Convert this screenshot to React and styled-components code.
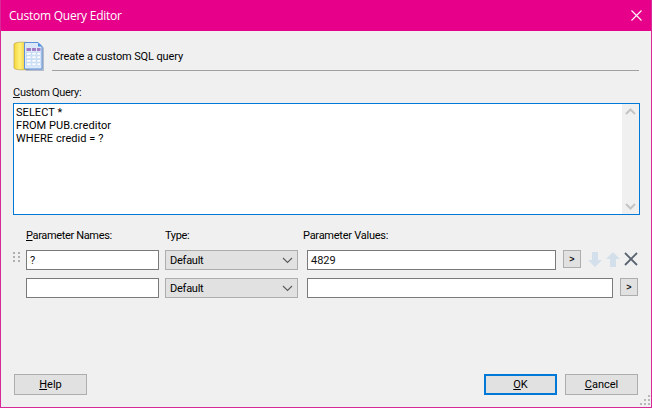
import React from "react";
import styled, { createGlobalStyle } from "styled-components";

const Global = createGlobalStyle`
  html, body { margin: 0; padding: 0; background: #f0f0f0; }
  body { font-family: Roboto, "Liberation Sans", Arial, sans-serif; font-size: 11px; color: #000; }
`;
const Win = styled.div`
  width: 652px; height: 408px; box-sizing: border-box;
  border: 1px solid #d82a96; border-top: 0;
  background: #f0f0f0; display: flex; flex-direction: column; position: relative; overflow: hidden;
`;
const TitleBar = styled.div`
  height: 31px; margin: 0 -1px; background: #e6008a; color: #fff;
  display: flex; align-items: center; justify-content: space-between;
  padding: 0 10px 0 9px; flex: none;
`;
const TitleText = styled.span`font: 12px "Open Sans", "Noto Sans", sans-serif; letter-spacing: -0.02em;`;
const Body = styled.div`
  flex: 1; display: flex; flex-direction: column; padding: 9px 12px 12px 12px; min-height: 0;
`;
const Header = styled.div`display: flex; height: 31px; gap: 8px;`;
const HeaderText = styled.div`
  flex: 1; border-bottom: 1px solid #a0a0a0; height: 31px; box-sizing: border-box;
  padding: 10px 0 0 1px; font-size: 11px; line-height: 14px; letter-spacing: -0.12px;
`;
const FieldLabel = styled.label`display: block; line-height: 13px; margin-top: 15px; margin-bottom: 4px; color: #111; letter-spacing: -0.3px;`;
const U = styled.span`text-decoration: underline;`;
const QueryBox = styled.div`
  height: 112px; box-sizing: border-box; border: 1px solid #0078d7; background: #fff;
  display: flex; margin-right: -1px;
`;
const QueryText = styled.pre`
  flex: 1; margin: 0; padding: 2px 2px; font: 11px/13px Roboto, "Liberation Sans", Arial, sans-serif; letter-spacing: 0.05px;
`;
const ScrollTrack = styled.div`
  width: 17px; background: #f0f0f0; display: flex; flex-direction: column;
  justify-content: space-between; align-items: center; padding: 4px 0; box-sizing: border-box;
`;
const ParamGrid = styled.div`
  display: grid; margin: 14px 0 0 13px;
  grid-template-columns: 133px 133px 331px;
  column-gap: 6px; row-gap: 8px; position: relative;
`;
const ColHead = styled.div`line-height: 13px; height: 13px; white-space: nowrap; letter-spacing: -0.35px;`;
const ValueHead = styled(ColHead)`margin-left: -1px; letter-spacing: -0.25px;`;
const TextField = styled.div`
  height: 20px; box-sizing: border-box; background: #fff; border: 1px solid #7a7a7a;
  padding: 0 3px; line-height: 19px; font-size: 11px; color: #111;
`;
const Combo = styled.div`
  height: 20px; box-sizing: border-box; background: #e1e1e1; border: 1px solid #adadad;
  display: flex; align-items: center; justify-content: space-between; padding: 0 4px 0 4px;
  letter-spacing: -0.25px;
`;
const ValueCell = styled.div`display: flex; gap: 7px; margin-left: 3px; align-items: flex-start;`;
const ValueField = styled(TextField)`width: ${p => p.$w}px; flex: none;`;
const Ellipsis = styled.button`
  width: 18px; height: 18px; padding: 0; flex: none; background: #e1e1e1; border: 1px solid #adadad;
  font: bold 9px "Liberation Sans", sans-serif; color: #111; line-height: 14px;
`;
const Tools = styled.div`display: flex; gap: 2px; margin-left: -1px; align-items: center; height: 18px;`;
const Grip = styled.svg`position: absolute; left: -13px; top: 23px;`;
const Spacer = styled.div`flex: 1;`;
const Footer = styled.div`display: flex; justify-content: space-between; padding: 0 1px 0 1px;`;
const Right = styled.div`display: flex; gap: 8px;`;
const Btn = styled.button`
  width: 73px; height: 21px; padding: 0; box-sizing: border-box; background: #e1e1e1;
  border: ${p => (p.$primary ? "2px solid #0078d7" : "1px solid #adadad")};
  font: 11px Roboto, "Liberation Sans", sans-serif; color: #000;
`;
const ResizeGrip = styled.div`position: absolute; right: 1px; bottom: 2px; line-height: 0;`;

const Chevron = () => (
  <svg width="11" height="7" viewBox="0 0 11 7"><path d="M1 1l4.5 4.5L10 1" fill="none" stroke="#5a5a5a" strokeWidth="1.1" /></svg>
);
const Caret = ({ up }) => (
  <svg width="11" height="7" viewBox="0 0 11 7"><path d={up ? "M1 6l4.5-4.5L10 6" : "M1 1l4.5 4.5L10 1"} fill="none" stroke="#c4c4c4" strokeWidth="2" /></svg>
);
const DbIcon = () => (
  <svg width="31" height="32" viewBox="0 0 31 32" style={{ flex: "none" }}>
    <defs>
      <linearGradient id="y" x1="0" x2="1" y1="0" y2="0">
        <stop offset="0" stopColor="#f4d63c" /><stop offset=".35" stopColor="#fff27a" /><stop offset="1" stopColor="#e0a810" />
      </linearGradient>
    </defs>
    <path d="M1 4c0-2.5 17-2.5 17 0v24c0 2.5-17 2.5-17 0z" fill="url(#y)" stroke="#b59a3a" strokeWidth=".6" />
    <path d="M12 3h14l4 4v23H12z" fill="#6d7fa0" opacity=".45" transform="translate(1 1)" />
    <path d="M11.5 2.5h13.5l4 4v22.5H11.5z" fill="#dbe8fa" stroke="#5d92d8" />
    <path d="M25 2.5v4h4z" fill="#4a90e0" />
    <rect x="13.5" y="8" width="4.5" height="3" fill="#a27cc4" /><rect x="19" y="8" width="4" height="3" fill="#a27cc4" /><rect x="24" y="8" width="3.5" height="3" fill="#a27cc4" />
    {[12.5, 16, 19.5, 23].map(y => [13.5, 19, 24].map(x => (
      <rect key={`${x}-${y}`} x={x} y={y} width={x === 13.5 ? 4.5 : x === 19 ? 4 : 3.5} height="2.5" fill="#fff" stroke="#a8c8ec" strokeWidth=".4" />
    )))}
  </svg>
);
const Arrow = ({ up }) => (
  <svg width="16" height="17" viewBox="0 0 16 17">
    <path d={up ? "M8 1L1 8h4v8h6V8h4z" : "M8 16L1 9h4V1h6v8h4z"} fill="#d3dfea" />
  </svg>
);
const Dots = ({ id, w, h, pts, fill }) => (
  <svg width={w} height={h} viewBox={`0 0 ${w} ${h}`}>
    {pts.map(([x, y]) => <rect key={`${id}${x}${y}`} x={x} y={y} width="2" height="2" fill={fill} />)}
  </svg>
);

function Row({ name, value, w, tools }) {
  return (
    <>
      <TextField>{name}</TextField>
      <Combo>Default<Chevron /></Combo>
      <ValueCell>
        <ValueField $w={w}>{value}</ValueField>
        <Ellipsis>&gt;</Ellipsis>
        {tools && (
          <Tools>
            <Arrow /><Arrow up />
            <svg width="16" height="16" viewBox="0 0 16 16"><path d="M2 2l12 12M14 2L2 14" stroke="#5a6470" strokeWidth="1.8" /></svg>
          </Tools>
        )}
      </ValueCell>
    </>
  );
}

export default function App() {
  return (
    <>
      <Global />
      <Win>
        <TitleBar>
          <TitleText>Custom Query Editor</TitleText>
          <svg width="11" height="11" viewBox="0 0 11 11"><path d="M.5.5l10 10M10.5.5l-10 10" stroke="#fff" strokeWidth="1.1" /></svg>
        </TitleBar>
        <Body>
          <Header>
            <DbIcon />
            <HeaderText>Create a custom SQL query</HeaderText>
          </Header>
          <FieldLabel><U>C</U>ustom Query:</FieldLabel>
          <QueryBox>
            <QueryText>{"SELECT *\nFROM PUB.creditor\nWHERE credid = ?"}</QueryText>
            <ScrollTrack><Caret up /><Caret /></ScrollTrack>
          </QueryBox>
          <ParamGrid>
            <ColHead><U>P</U>arameter Names:</ColHead>
            <ColHead>Type:</ColHead>
            <ValueHead>Parameter Values:</ValueHead>
            <Row name="?" value="4829" w={249} tools />
            <Row name="" value="" w={306} />
            <Grip width="7" height="10" viewBox="0 0 7 10">
              {[0, 4, 8].map(y => [0, 5].map(x => <rect key={`${x}${y}`} x={x} y={y} width="2" height="2" fill="#b0b0b0" />))}
            </Grip>
          </ParamGrid>
          <Spacer />
          <Footer>
            <Btn><U>H</U>elp</Btn>
            <Right>
              <Btn $primary><U>O</U>K</Btn>
              <Btn><U>C</U>ancel</Btn>
            </Right>
          </Footer>
        </Body>
        <ResizeGrip><Dots id="g" w={10} h={10} fill="#b8b8b8" pts={[[8,0],[4,4],[8,4],[0,8],[4,8],[8,8]]} /></ResizeGrip>
      </Win>
    </>
  );
}
